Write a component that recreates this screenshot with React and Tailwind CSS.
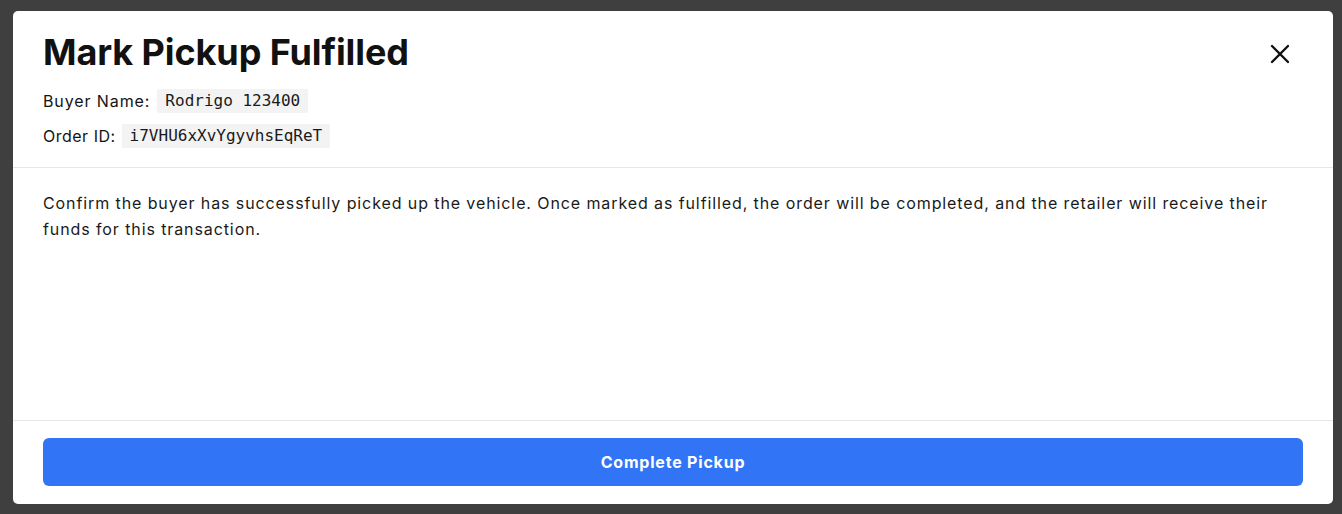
import { useState } from 'react'

const sans = { fontFamily: 'Inter, "Noto Sans", sans-serif' }

const Chip = ({ children }) => (
  <code className="bg-[#f3f3f3] px-[8px] h-[24px] flex items-center text-[16px] tracking-normal text-[#1a1a1a] rounded-[2px] font-['DejaVu_Sans_Mono',monospace]">
    {children}
  </code>
)

const CloseIcon = () => (
  <svg width="20" height="20" viewBox="0 0 20 20" fill="none" stroke="currentColor" strokeWidth="2.4" strokeLinecap="round">
    <path d="M2 2 L18 18" />
    <path d="M18 2 L2 18" />
  </svg>
)

export default function App() {
  const [open, setOpen] = useState(true)
  const order = { buyer: 'Rodrigo 123400', id: 'i7VHU6xXvYgyvhsEqReT' }

  return (
    <div className="w-full h-[514px] bg-[#3f3f3f] pt-[11px] pl-[13px] pr-[9px] overflow-hidden" style={sans}>
      {open && (
        <div className="bg-white rounded-[5px] h-[493px] flex flex-col text-[#141414]">
          <div className="relative px-[30px] pt-[21px] pb-[19px] border-b border-[#e6e6e6]">
            <h1 className="text-[36px] leading-[40px] font-bold tracking-[-0.1px] text-[#111]">
              Mark Pickup Fulfilled
            </h1>
            <div className="mt-[17px] flex items-center gap-[7px] text-[16px] tracking-[0.9px]">
              <span>Buyer Name:</span>
              <Chip>{order.buyer}</Chip>
            </div>
            <div className="mt-[11px] flex items-center gap-[6px] text-[16px] tracking-[0.5px]">
              <span>Order ID:</span>
              <Chip>{order.id}</Chip>
            </div>
            <button
              onClick={() => setOpen(false)}
              className="absolute right-[43px] top-[33px] text-[#111]"
            >
              <CloseIcon />
            </button>
          </div>
          <div className="flex-1 px-[30px] pt-[22px]">
            <p className="text-[16px] leading-[26px] tracking-[0.9px] text-[#1a1a1a]">
              Confirm the buyer has successfully picked up the vehicle. Once marked as fulfilled, the order will be completed, and the retailer will receive their funds for this transaction.
            </p>
          </div>
          <div className="border-t border-[#e6e6e6] px-[30px] pt-[17px] pb-[18px]">
            <button className="w-full h-[48px] rounded-[6px] bg-[#3174f6] text-white text-[16px] font-bold tracking-[0.8px]">
              Complete Pickup
            </button>
          </div>
        </div>
      )}
    </div>
  )
}
